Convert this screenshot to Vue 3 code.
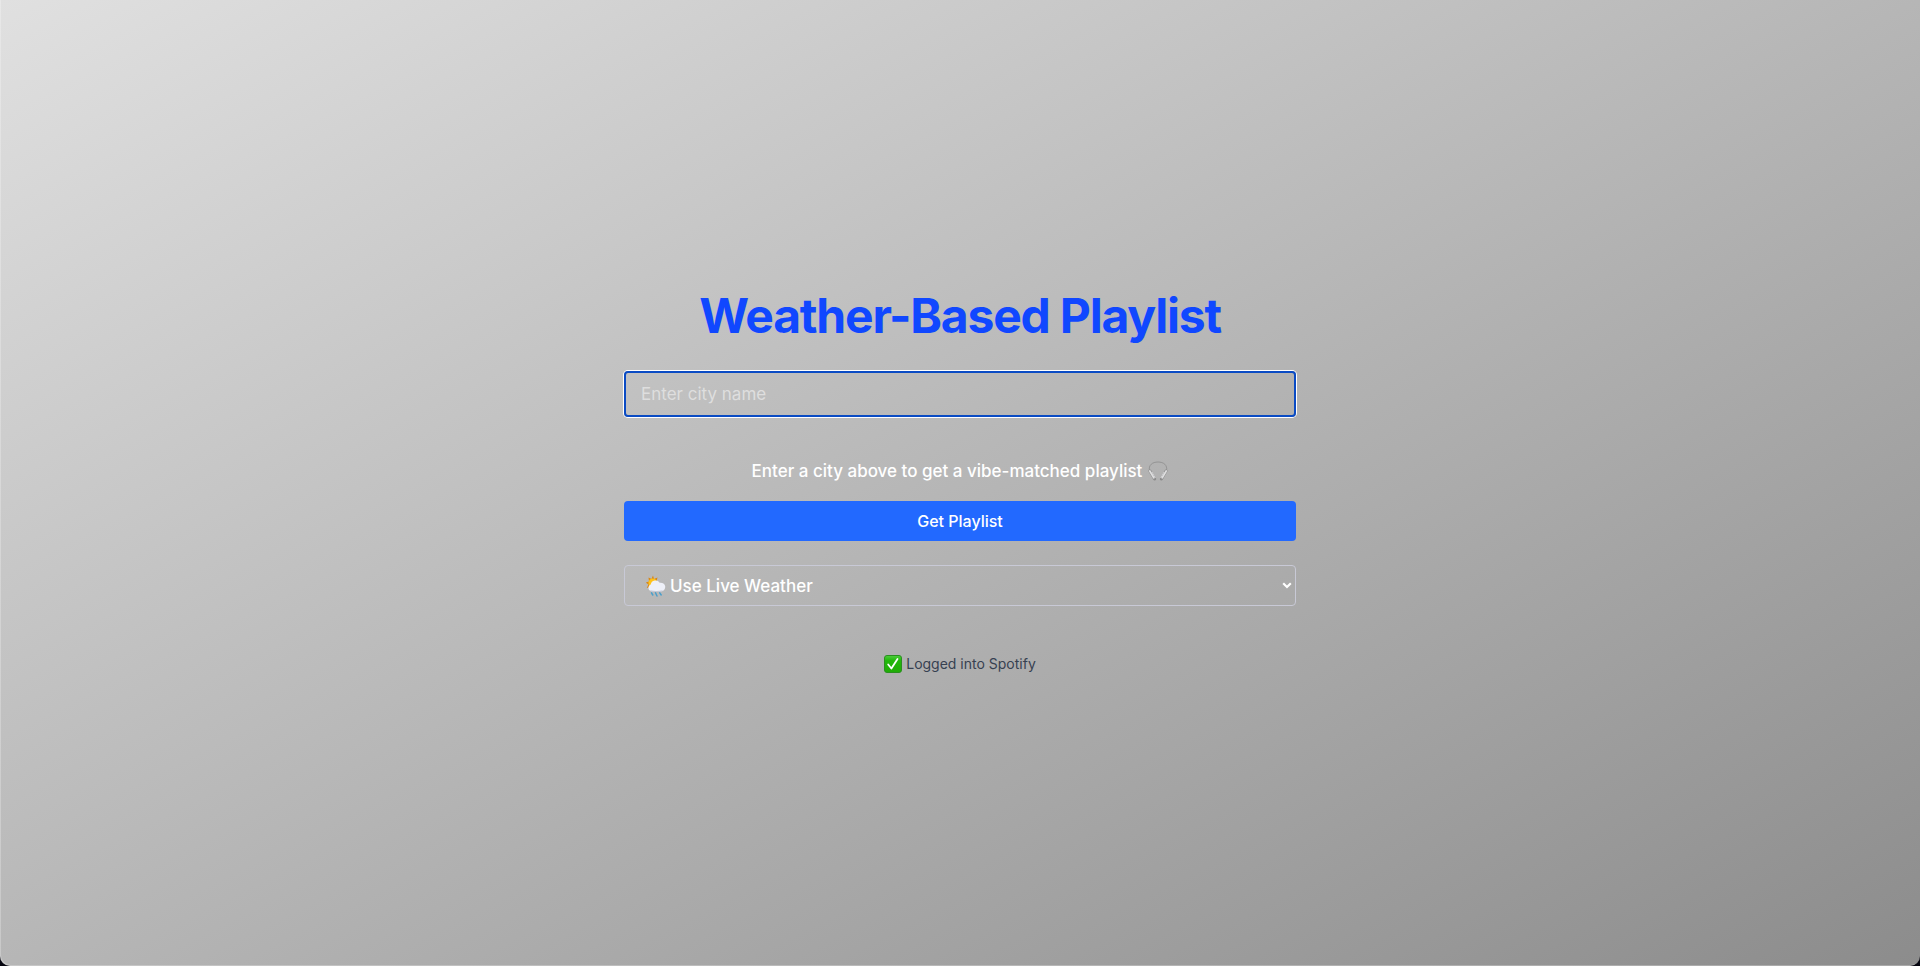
<script setup>
import { ref } from 'vue'

const city = ref('')
const weather = ref('live')
</script>

<template>
  <div class="backdrop">
    <main class="page">
      <form class="content" @submit.prevent>
        <h1 class="title">Weather-Based Playlist</h1>
        <input v-model="city" class="city" type="text" placeholder="Enter city name" aria-label="City name" />
        <p class="hint">
          Enter a city above to get a vibe-matched playlist
          <svg class="headphones" viewBox="0 0 20 20" aria-hidden="true">
            <path d="M1.500 10C.2 4 4.500 1 10 1s9.800 3 8.500 9" fill="none" stroke="#909090" stroke-width=".9" />
            <path d="M2 10 6.600 18" stroke="#8c8c8c" stroke-width="3" stroke-linecap="round" />
            <path d="M1.800 10 5.800 16.800" stroke="#dededf" stroke-width="1.800" stroke-linecap="round" />
            <path d="M4 11 7.300 17" stroke="#d0d0d2" stroke-width="1" />
            <path d="M18 10 13.400 18" stroke="#8c8c8c" stroke-width="3" stroke-linecap="round" />
            <path d="M18.200 10 14.200 16.800" stroke="#dededf" stroke-width="1.800" stroke-linecap="round" />
            <path d="M16 11 12.700 17" stroke="#d0d0d2" stroke-width="1" />
          </svg>
        </p>
        <button class="submit" type="submit">Get Playlist</button>
        <div class="picker">
          <select v-model="weather" class="select" aria-label="Weather source">
            <option value="live">Use Live Weather</option>
          </select>
          <svg class="weather-icon" viewBox="0 0 20 22" aria-hidden="true">
            <path d="M7 .5 8 4 11.500 2.500 10.500 6 5 12 .8 13 2.500 9.500-.2 7.500 3 6.500 2.500 2.500 5.500 4Z" fill="#d98612" />
            <circle cx="6.800" cy="7.800" r="4.400" fill="#ffc21a" />
            <path d="M5 16.200A3.500 3.500 0 0 1 4.700 9.500 4.900 4.900 0 0 1 13.700 7.800 4.300 4.300 0 0 1 16 16.200Z" fill="#eef0f8" />
            <path d="M4 15.200Q10 16.600 17 15.200L15.500 16.700H5.500Z" fill="#c5c8d8" />
            <path d="M5.500 17.800 6.800 20M9.500 17.800 11 21M13.700 17.800 15.200 20" stroke="#4b9fcb" stroke-width="1.500" stroke-linecap="round" />
          </svg>
          <svg class="chevron" viewBox="0 0 10 7" aria-hidden="true">
            <path d="M1.200 1.300 5 5 8.800 1.300" fill="none" stroke="#fff" stroke-width="2.200" />
          </svg>
        </div>
        <p class="status">
          <svg class="check" viewBox="0 0 18 18" aria-hidden="true">
            <defs>
              <linearGradient id="check-fill" x1="0" y1="0" x2="0" y2="1">
                <stop offset="0" stop-color="#4fce3e" />
                <stop offset=".3" stop-color="#22b70b" />
                <stop offset="1" stop-color="#20ac06" />
              </linearGradient>
            </defs>
            <rect x=".5" y=".5" width="17" height="17" rx="2.500" fill="url(#check-fill)" stroke="#2b8f20" />
            <path d="M4.200 9.500 7.400 13.500 13.500 4" fill="none" stroke="#fff" stroke-width="1.800" stroke-linecap="round" stroke-linejoin="round" />
          </svg>
          Logged into Spotify
        </p>
      </form>
    </main>
  </div>
</template>

<style>
body {
  margin: 0;
}
</style>

<style scoped>
.backdrop {
  background: #05050f;
}

.page {
  min-height: 100vh;
  box-sizing: border-box;
  display: flex;
  align-items: center;
  justify-content: center;
  padding: 24px;
  border-radius: 0 0 10px 10px;
  background: linear-gradient(to bottom right, #e0e0e0, #8c8c8c);
  box-shadow: inset 1px -1px 0 rgba(255, 255, 255, 0.25);
  color: #fff;
  font-family: Inter, "Noto Sans", sans-serif;
}

.content {
  width: 100%;
  max-width: 672px;
  display: flex;
  flex-direction: column;
}

.title {
  margin: 0 0 31px;
  font-size: 48px;
  line-height: 48px;
  font-weight: 700;
  letter-spacing: -0.025em;
  text-align: center;
  color: #1047ff;
}

.city,
.select,
.submit {
  box-sizing: border-box;
  width: 100%;
  border-radius: 4px;
  font-family: inherit;
}

.city {
  height: 46px;
  padding: 0 15px;
  border: 2px solid #0a4bc4;
  outline: none;
  box-shadow: 0 0 0 1px #fff;
  background: transparent;
  color: #fff;
  font-size: 17px;
}

.city::placeholder {
  color: #dedede;
  opacity: 1;
}

.hint {
  display: flex;
  align-items: center;
  justify-content: center;
  gap: 6px;
  margin: 40px 0 16px;
  font-size: 17px;
  line-height: 28px;
  font-weight: 500;
}

.headphones {
  width: 20px;
  height: 20px;
}

.submit {
  height: 40px;
  border: 0;
  background: #2269ff;
  color: #fff;
  font-size: 16px;
  font-weight: 500;
}

.picker {
  position: relative;
  margin-top: 24px;
}

.select {
  display: block;
  height: 41px;
  padding: 0 32px 0 45px;
  border: 1px solid #c8c9d6;
  appearance: none;
  background: transparent;
  color: #fff;
  font-size: 17px;
  font-weight: 500;
}

.weather-icon {
  position: absolute;
  left: 22px;
  top: 10px;
  width: 20px;
  height: 22px;
  pointer-events: none;
}

.chevron {
  position: absolute;
  right: 4px;
  top: 17px;
  width: 10px;
  height: 7px;
  pointer-events: none;
}

.status {
  display: flex;
  align-items: center;
  justify-content: center;
  gap: 4px;
  margin: 48px 0 0;
  color: #374151;
  font-size: 14px;
  line-height: 20px;
}

.check {
  width: 18px;
  height: 18px;
}
</style>
